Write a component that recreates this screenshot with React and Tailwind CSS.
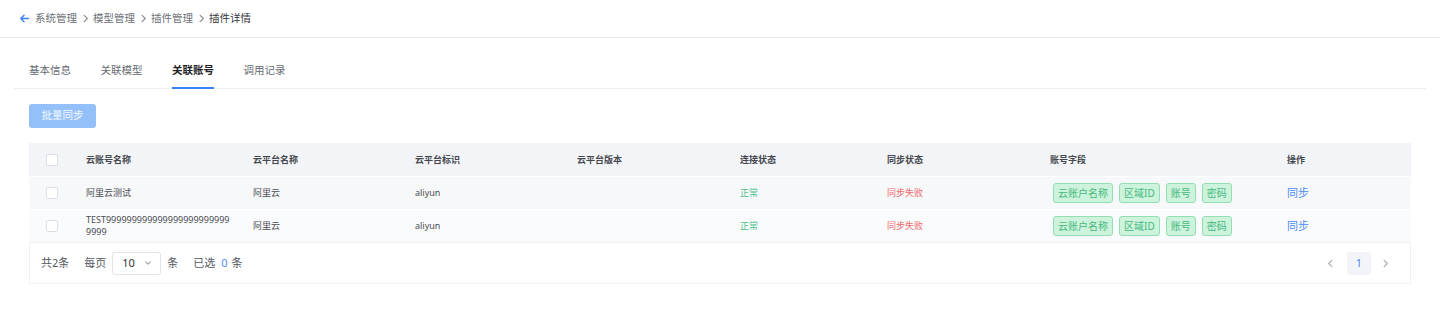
import React from "react";

const font = { fontFamily: '"Noto Sans", "Noto Sans CJK SC", sans-serif' };

function Chevron({ dir = "right", className = "" }) {
  return (
    <svg viewBox="0 0 10 10" className={className} fill="none" stroke="currentColor" strokeWidth="1.3" strokeLinecap="round" strokeLinejoin="round">
      {dir === "right" && <path d="M3.5 1.5 L7 5 L3.5 8.5" />}
      {dir === "left" && <path d="M6.5 1.5 L3 5 L6.5 8.5" />}
      {dir === "down" && <path d="M2 3.5 L5 6.5 L8 3.5" />}
    </svg>
  );
}

function Checkbox() {
  return <div className="w-[12px] h-[12px] rounded-[2px] border border-[#dcdfe6] bg-white" />;
}

function Tag({ children }) {
  return (
    <span className="inline-flex items-center h-[20px] px-[4px] rounded-[3px] border border-[#93dfb2] bg-[#cdf3dc] text-[#46b97c] text-[10px] leading-none">
      {children}
    </span>
  );
}

const cols = "grid grid-cols-[57px_167px_162px_162px_163px_147px_163px_237px_1fr] items-center";

const rows = [
  { name: "阿里云测试", bg: "bg-[#f7f8fa]" },
  { name: "TEST9999999999999999999999999999", bg: "bg-[#fafbfc]" },
];

export default function App() {
  return (
    <div className="w-[1440px] h-[317px] bg-white" style={font}>
      {/* breadcrumb */}
      <div className="h-[38px] border-b border-[#e9ebee] flex items-center pl-[19px] text-[10.5px] text-[#6b6f76]">
        <svg viewBox="0 0 12 12" className="w-[11px] h-[11px] text-[#3d7ff5] mr-[5px]" fill="none" stroke="currentColor" strokeWidth="1.4" strokeLinecap="round" strokeLinejoin="round">
          <path d="M10.5 6 H2 M5.5 2.5 L2 6 L5.5 9.5" />
        </svg>
        <span>系统管理</span>
        <Chevron className="w-[9px] h-[9px] ml-[4px] mr-[3px] text-[#8a8e95]" />
        <span>模型管理</span>
        <Chevron className="w-[9px] h-[9px] ml-[4px] mr-[3px] text-[#8a8e95]" />
        <span>插件管理</span>
        <Chevron className="w-[9px] h-[9px] ml-[4px] mr-[3px] text-[#8a8e95]" />
        <span className="text-[#33363b]">插件详情</span>
      </div>

      <div className="px-[14px]">
        {/* tabs */}
        <div className="mt-[20px] flex border-b border-[#eceef1] pl-[15px] gap-[29.5px] text-[10.5px]">
          {["基本信息", "关联模型", "关联账号", "调用记录"].map((t) => {
            const active = t === "关联账号";
            return (
              <div
                key={t}
                className={
                  "h-[31px] -mb-px flex items-center pb-[3px] border-b-2 " +
                  (active ? "border-[#3d7ff5] text-[#1f2226] font-bold" : "border-transparent text-[#676b72]")
                }
              >
                {t}
              </div>
            );
          })}
        </div>

        <div className="px-[15px]">
          {/* button */}
          <div className="mt-[15px]">
            <button className="w-[67px] h-[24px] rounded-[3px] bg-[#94c0fa] text-white/90 text-[10.5px] flex items-center justify-center">
              批量同步
            </button>
          </div>

          {/* table */}
          <div className="mt-[15px]">
            <div className={cols + " h-[33px] bg-[#f3f4f7] text-[9px] font-semibold text-[#44474d]"}>
              <div className="pl-[17px]"><Checkbox /></div>
              <div>云账号名称</div>
              <div>云平台名称</div>
              <div>云平台标识</div>
              <div>云平台版本</div>
              <div>连接状态</div>
              <div>同步状态</div>
              <div>账号字段</div>
              <div>操作</div>
            </div>
            {rows.map((r, i) => (
              <div key={i} className={cols + " h-[33px] border-t border-white text-[9px] text-[#4a4d52] " + r.bg}>
                <div className="pl-[17px]"><Checkbox /></div>
                <div className="pr-[22px] break-all leading-[12px]">{r.name}</div>
                <div>阿里云</div>
                <div>aliyun</div>
                <div></div>
                <div className="text-[#4cc38a]">正常</div>
                <div className="text-[#f06a6a]">同步失败</div>
                <div className="flex gap-[6px] pl-[3px]">
                  <Tag>云账户名称</Tag>
                  <Tag>区域ID</Tag>
                  <Tag>账号</Tag>
                  <Tag>密码</Tag>
                </div>
                <div className="text-[11px] text-[#4d8df6]">同步</div>
              </div>
            ))}

            {/* footer */}
            <div className="h-[42px] border border-[#f0f1f3] flex items-center justify-between pl-[11px] pr-[20px] text-[11px] text-[#55595f]">
              <div className="flex items-center">
                <span>共2条</span>
                <span className="ml-[15px]">每页</span>
                <div className="ml-[6px] w-[49px] h-[23px] border border-[#e1e4ea] rounded-[3px] flex items-center justify-between pl-[9px] pr-[8px] text-[#333]">
                  <span>10</span>
                  <Chevron dir="down" className="w-[8px] h-[8px] text-[#9aa0a8]" />
                </div>
                <span className="ml-[6px]">条</span>
                <span className="ml-[15px]">已选</span>
                <span className="ml-[6px] text-[#4d8df6]">0</span>
                <span className="ml-[4px]">条</span>
              </div>
              <div className="flex items-center">
                <Chevron dir="left" className="w-[9px] h-[9px] text-[#a9aeb7]" />
                <div className="ml-[12px] w-[24px] h-[23px] rounded-[3px] bg-[#f2f4f8] text-[#4d8df6] flex items-center justify-center">1</div>
                <Chevron dir="right" className="ml-[10px] w-[9px] h-[9px] text-[#a9aeb7]" />
              </div>
            </div>
          </div>
        </div>
      </div>
    </div>
  );
}
